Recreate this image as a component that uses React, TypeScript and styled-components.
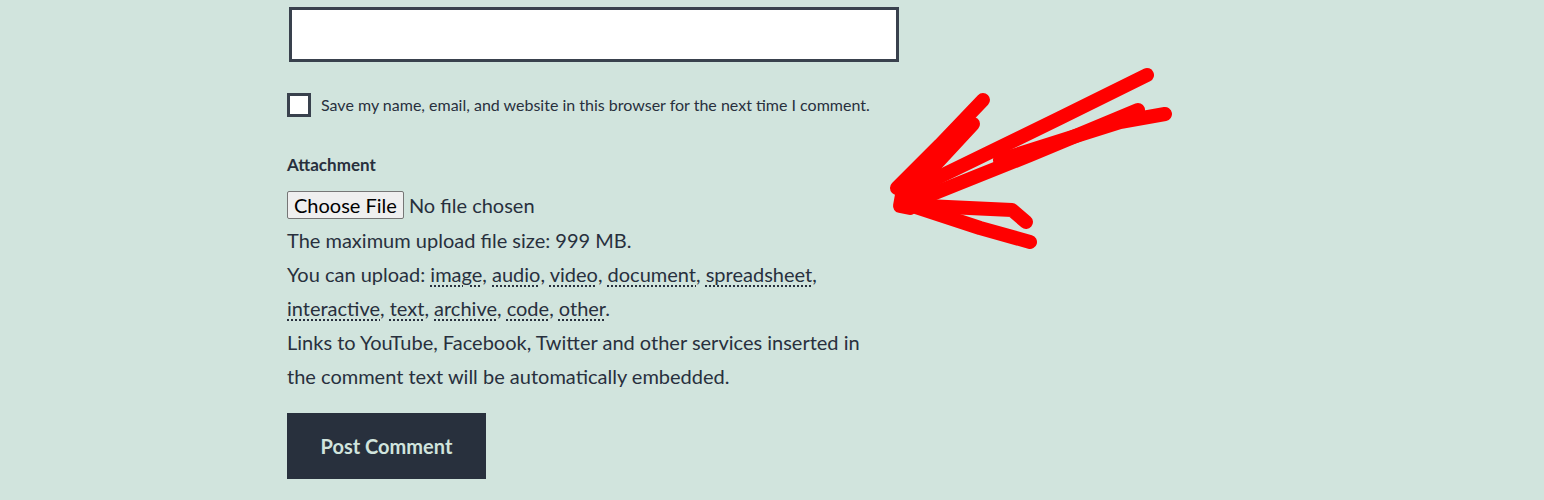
import { createGlobalStyle, styled } from "styled-components";

const GlobalStyle = createGlobalStyle`
  html, body {
    margin: 0;
    padding: 0;
    background: #d1e4dd;
  }
  body {
    font-family: Lato, "Liberation Sans", sans-serif;
    color: #28303d;
  }
`;

const types = [
  "image",
  "audio",
  "video",
  "document",
  "spreadsheet",
  "interactive",
  "text",
  "archive",
  "code",
  "other",
];

const Arrow = () => (
  <Scribble width="300" height="200" viewBox="0 0 300 200">
    <g
      fill="none"
      stroke="#ff0000"
      strokeWidth="14"
      strokeLinecap="round"
      strokeLinejoin="round"
    >
      <path d="M267 15 L180 58 L22 135" />
      <path d="M258 50 L150 95 L25 145" />
      <path d="M285 54 L240 62 L120 100" />
      <path d="M103 40 L60 85 L17 128" />
      <path d="M93 64 L55 105 L25 140" />
      <path d="M25 145 L132 150 L146 162" />
      <path d="M30 145 L100 168 L150 182" />
      <path d="M22 135 L20 146 L30 148" />
    </g>
  </Scribble>
);

const App = () => {
  return (
    <>
      <GlobalStyle />
      <Page>
        <Form>
          <TextField type="text" />
          <Consent>
            <Check type="checkbox" />
            <ConsentLabel>
              Save my name, email, and website in this browser for the next time
              I comment.
            </ConsentLabel>
          </Consent>
          <Attachment>
            <FieldTitle>Attachment</FieldTitle>
            <FileInput type="file" />
            <Notes>
              <p>The maximum upload file size: 999 MB.</p>
              <p>
                You can upload:{" "}
                {types.map((t, i) => (
                  <span key={t}>
                    <Abbr>{t}</Abbr>
                    {i === types.length - 1 ? "." : ", "}
                  </span>
                ))}
              </p>
              <p>
                Links to YouTube, Facebook, Twitter and other services inserted
                in the comment text will be automatically embedded.
              </p>
            </Notes>
          </Attachment>
          <Submit>Post Comment</Submit>
        </Form>
        <Arrow />
      </Page>
    </>
  );
};

export default App;

const Page = styled.div`
  position: relative;
  width: 1544px;
  height: 500px;
  overflow: hidden;
  padding: 7px 0 0 287px;
  box-sizing: border-box;
`;

const Form = styled.div`
  width: 612px;
  display: flex;
  flex-direction: column;
  align-items: flex-start;
`;

const TextField = styled.input`
  box-sizing: border-box;
  width: 610px;
  height: 55px;
  margin-left: 2px;
  border: 3px solid #39414d;
  background: #fff;
  outline: none;
`;

const Consent = styled.label`
  display: flex;
  align-items: center;
  gap: 10px;
  margin-top: 31px;
`;

const Check = styled.input`
  appearance: none;
  box-sizing: border-box;
  width: 24px;
  height: 24px;
  margin: 0;
  border: 3px solid #39414d;
  background: #fff;
`;

const ConsentLabel = styled.span`
  font-size: 16px;
  line-height: 24px;
`;

const Attachment = styled.div`
  margin-top: 36px;
  display: flex;
  flex-direction: column;
  align-items: flex-start;
`;

const FieldTitle = styled.div`
  font-size: 17px;
  font-weight: 700;
  line-height: 24px;
  margin-bottom: 14px;
`;

const FileInput = styled.input`
  font-family: inherit;
  font-size: 20px;
  color: #28303d;
  height: 28px;

  &::file-selector-button {
    font-family: inherit;
    font-size: 20px;
    color: #000;
    background: #efefef;
    border: 1px solid #767676;
    border-radius: 2px;
    padding: 0 6px;
    height: 28px;
    margin-right: 5px;
  }
`;

const Notes = styled.div`
  max-width: 585px;
  font-size: 20px;
  line-height: 34px;
  margin-top: 4px;

  p {
    margin: 0;
  }
`;

const Abbr = styled.abbr`
  text-decoration: underline dotted;
  text-underline-offset: 3px;
`;

const Submit = styled.button`
  margin-top: 20px;
  width: 199px;
  height: 66px;
  border: none;
  background: #28303d;
  color: #d1e4dd;
  font-family: inherit;
  font-size: 20px;
  font-weight: 700;
`;

const Scribble = styled.svg`
  position: absolute;
  left: 880px;
  top: 60px;
`;
